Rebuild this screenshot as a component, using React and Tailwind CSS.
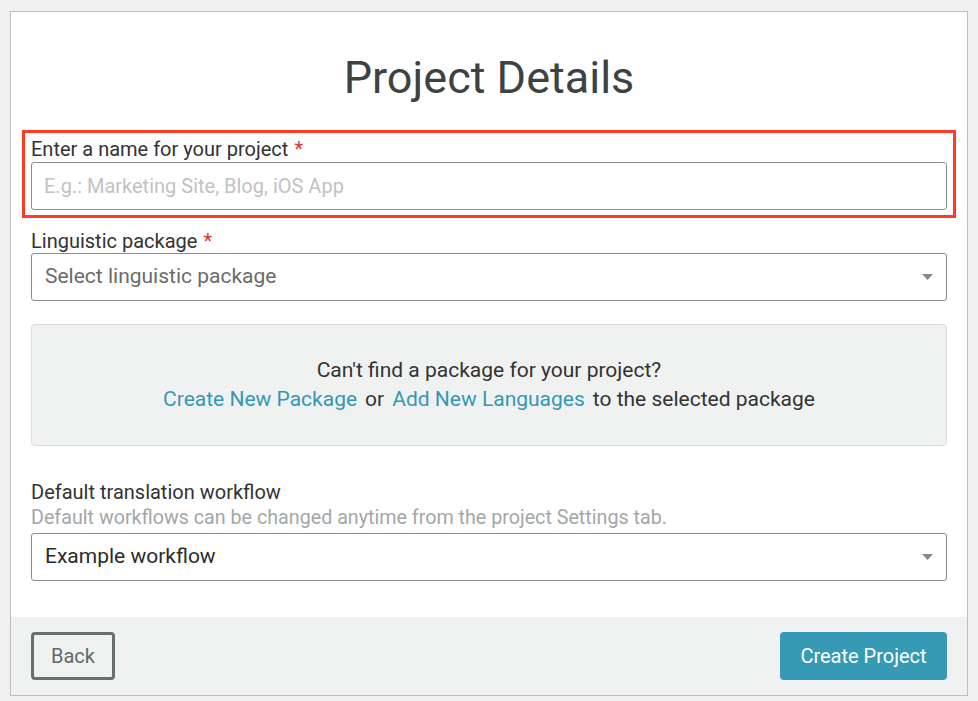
import React from 'react';

const font = { fontFamily: 'Roboto, "Liberation Sans", sans-serif' };

const Caret = () => (
  <svg width="11" height="6" viewBox="0 0 11 6" className="shrink-0">
    <path d="M0 0 H11 L5.5 6 Z" fill="#888" />
  </svg>
);

const Select = ({ value, placeholder }) => (
  <div className="h-[48px] w-full border border-[#8c8c8c] rounded-[3px] bg-white flex items-center justify-between pl-[13px] pr-[13px]">
    <span className={placeholder ? 'text-[21px] text-[#6b6b6b]' : 'text-[21px] text-[#2b2b2b]'}>{value}</span>
    <Caret />
  </div>
);

const Label = ({ children, required }) => (
  <div className="text-[20px] leading-[24px] text-[#333]">
    {children}
    {required && <span className="text-[#d9352b] ml-[6px]">*</span>}
  </div>
);

export default function App() {
  return (
    <div className="min-h-screen bg-[#f0f0f0] pt-[11px] pl-[10px]" style={font}>
      <div className="w-[958px] border border-[#bdbdbd] bg-white">
        <div className="px-5 pt-[38px] pb-[36px]">
          <h1 className="text-center text-[45px] leading-[55px] text-[#3d4242] mb-[25px]">Project Details</h1>

          {/* highlighted field */}
          <div className="-mx-[9px] px-[6px] pt-[4px] pb-[5px] border-[3px] border-[#ff3b21]">
            <div className="mb-[1px]">
              <Label required>Enter a name for your project</Label>
            </div>
            <input
              type="text"
              placeholder="E.g.: Marketing Site, Blog, iOS App"
              className="block w-full h-[48px] border border-[#8c8c8c] rounded-[3px] px-[12px] text-[20px] text-[#333] placeholder:text-[#c2c2c2] outline-none"
            />
          </div>

          <div className="mt-[11px]">
            <Label required>Linguistic package</Label>
          </div>
          <Select value="Select linguistic package" placeholder />

          <div className="mt-[23px] h-[122px] bg-[#f0f2f1] border border-[#dcdcdc] rounded-[4px] flex flex-col items-center justify-center text-[21px] leading-[29px] text-[#333]">
            <div>Can't find a package for your project?</div>
            <div>
              <a className="text-[#3399b3] cursor-pointer">Create New Package</a>
              <span className="mx-[8px]">or</span>
              <a className="text-[#3399b3] cursor-pointer">Add New Languages</a>
              <span className="ml-[8px]">to the selected package</span>
            </div>
          </div>

          <div className="mt-[34px] mb-[2px]">
            <Label>Default translation workflow</Label>
          </div>
          <div className="text-[19.7px] leading-[24px] text-[#a2a7a7] mb-[3px]">
            Default workflows can be changed anytime from the project Settings tab.
          </div>
          <Select value="Example workflow" />
        </div>

        <div className="bg-[#f0f2f1] px-5 py-[15px] flex items-center justify-between">
          <button className="h-[48px] w-[84px] border-[3px] border-[#66706f] rounded-[4px] text-[20px] text-[#5f6a69] bg-transparent">
            Back
          </button>
          <button className="h-[48px] w-[167px] rounded-[4px] bg-[#379ab5] text-[20px] text-white">
            Create Project
          </button>
        </div>
      </div>
    </div>
  );
}
